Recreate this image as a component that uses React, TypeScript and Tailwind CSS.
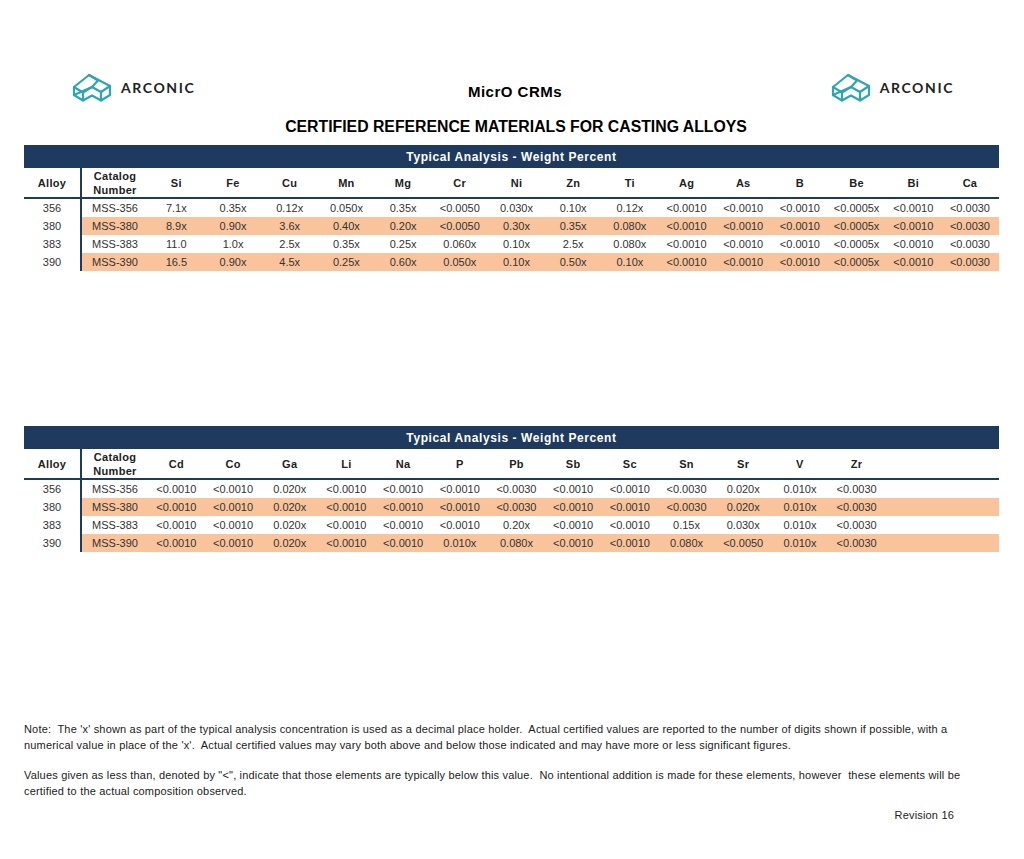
import { FC } from "react";

const font = { fontFamily: '"Liberation Sans", Arial, sans-serif' };

const table1Elements = ["Si", "Fe", "Cu", "Mn", "Mg", "Cr", "Ni", "Zn", "Ti", "Ag", "As", "B", "Be", "Bi", "Ca"];
const table1Rows = [
  ["356", "MSS-356", "7.1x", "0.35x", "0.12x", "0.050x", "0.35x", "<0.0050", "0.030x", "0.10x", "0.12x", "<0.0010", "<0.0010", "<0.0010", "<0.0005x", "<0.0010", "<0.0030"],
  ["380", "MSS-380", "8.9x", "0.90x", "3.6x", "0.40x", "0.20x", "<0.0050", "0.30x", "0.35x", "0.080x", "<0.0010", "<0.0010", "<0.0010", "<0.0005x", "<0.0010", "<0.0030"],
  ["383", "MSS-383", "11.0", "1.0x", "2.5x", "0.35x", "0.25x", "0.060x", "0.10x", "2.5x", "0.080x", "<0.0010", "<0.0010", "<0.0010", "<0.0005x", "<0.0010", "<0.0030"],
  ["390", "MSS-390", "16.5", "0.90x", "4.5x", "0.25x", "0.60x", "0.050x", "0.10x", "0.50x", "0.10x", "<0.0010", "<0.0010", "<0.0010", "<0.0005x", "<0.0010", "<0.0030"],
];

const table2Elements = ["Cd", "Co", "Ga", "Li", "Na", "P", "Pb", "Sb", "Sc", "Sn", "Sr", "V", "Zr"];
const table2Rows = [
  ["356", "MSS-356", "<0.0010", "<0.0010", "0.020x", "<0.0010", "<0.0010", "<0.0010", "<0.0030", "<0.0010", "<0.0010", "<0.0030", "0.020x", "0.010x", "<0.0030"],
  ["380", "MSS-380", "<0.0010", "<0.0010", "0.020x", "<0.0010", "<0.0010", "<0.0010", "<0.0030", "<0.0010", "<0.0010", "<0.0030", "0.020x", "0.010x", "<0.0030"],
  ["383", "MSS-383", "<0.0010", "<0.0010", "0.020x", "<0.0010", "<0.0010", "<0.0010", "0.20x", "<0.0010", "<0.0010", "0.15x", "0.030x", "0.010x", "<0.0030"],
  ["390", "MSS-390", "<0.0010", "<0.0010", "0.020x", "<0.0010", "<0.0010", "0.010x", "0.080x", "<0.0010", "<0.0010", "0.080x", "<0.0050", "0.010x", "<0.0030"],
];

const ArconicLogo: FC = () => (
  <div className="flex items-center gap-[9px]">
    <svg width="40" height="31" viewBox="0 0 40 31" fill="none" stroke="#2ea6ae" strokeWidth="2.2" strokeLinejoin="round" strokeLinecap="round">
      <path d="M2 15 L17 3 L38 14 L38 23 L29 28.5 L20 23.5 L11 28.5 L2 23 Z" />
      <path d="M2 15 L11 20.5 L11 28.5" />
      <path d="M11 20.5 L20 15 L29 20 L38 14" />
      <path d="M29 20 L29 28.5" />
      <path d="M17 3 L26 8.5 L20 15" />
      <path d="M2 23 L20 15" />
    </svg>
    <span
      className="text-[14px] font-bold tracking-[1.6px] text-[#222]"
      style={{ fontFamily: '"Lato", "Open Sans", sans-serif' }}
    >
      ARCONIC
    </span>
  </div>
);

type TableProps = {
  elements: string[];
  rows: string[][];
};

const AnalysisTable: FC<TableProps> = ({ elements, rows }) => (
  <div className="w-[975px]">
    <div className="h-[23px] bg-[#1f3a5f] flex items-center justify-center text-white text-[12px] font-bold tracking-[0.6px]">
      Typical Analysis - Weight Percent
    </div>
    <div className="flex h-[29px] text-[11px] font-bold text-[#222] leading-[14px] tracking-[0.3px]">
      <div className="w-[58px] border-r-2 border-[#1f3a5f] flex items-center justify-center">Alloy</div>
      <div className="w-[66px] flex flex-col items-center justify-center">
        <span>Catalog</span>
        <span>Number</span>
      </div>
      {elements.map((el) => (
        <div key={el} className="w-[56.7px] flex items-center justify-center">
          {el}
        </div>
      ))}
    </div>
    <div className="h-[2px] bg-[#1f3a5f]" />
    {rows.map((row, i) => (
      <div key={row[0]} className="flex h-[18px] text-[11px] text-[#333] leading-[18px]">
        <div className="w-[58px] border-r-2 border-[#1f3a5f] text-center">{row[0]}</div>
        <div className={`flex flex-1 ${i % 2 === 1 ? "bg-[#f9c49b]" : ""}`}>
          <div className="w-[66px] text-center">{row[1]}</div>
          {row.slice(2).map((v, j) => (
            <div key={j} className="w-[56.7px] text-center whitespace-nowrap">
              {v}
            </div>
          ))}
        </div>
      </div>
    ))}
  </div>
);

export default function App() {
  return (
    <div className="w-[1024px] h-[859px] bg-white px-[24px] pt-[72px]" style={font}>
      <div className="grid grid-cols-[1fr_auto_1fr] items-start">
        <div className="pl-[48px]">
          <ArconicLogo />
        </div>
        <div className="pt-[11px] pl-[6px] text-[15px] leading-[18px] font-bold tracking-[0.5px] text-black">MicrO CRMs</div>
        <div className="flex justify-end pr-[46px]">
          <ArconicLogo />
        </div>
      </div>
      <div className="mt-[14px] pl-[8px] text-center text-[15.8px] leading-[20px] font-bold text-black">
        CERTIFIED REFERENCE MATERIALS FOR CASTING ALLOYS
      </div>
      <div className="mt-[8px]">
        <AnalysisTable elements={table1Elements} rows={table1Rows} />
      </div>
      <div className="mt-[155px]">
        <AnalysisTable elements={table2Elements} rows={table2Rows} />
      </div>
      <div className="mt-[170px] text-[11px] leading-[15.5px] tracking-[0.18px] text-[#222]">
        <p className="whitespace-nowrap">
          Note:&nbsp; The 'x' shown as part of the typical analysis concentration is used as a decimal place holder.&nbsp; Actual certified values are reported to the number of digits shown if possible, with a
        </p>
        <p className="whitespace-nowrap">
          numerical value in place of the 'x'.&nbsp; Actual certified values may vary both above and below those indicated and may have more or less significant figures.
        </p>
        <p className="mt-[15px] whitespace-nowrap">
          Values given as less than, denoted by "&lt;", indicate that those elements are typically below this value.&nbsp; No intentional addition is made for these elements, however&nbsp; these elements will be
        </p>
        <p className="whitespace-nowrap">certified to the actual composition observed.</p>
        <div className="mt-[9px] flex justify-end pr-[46px]">Revision 16</div>
      </div>
    </div>
  );
}
